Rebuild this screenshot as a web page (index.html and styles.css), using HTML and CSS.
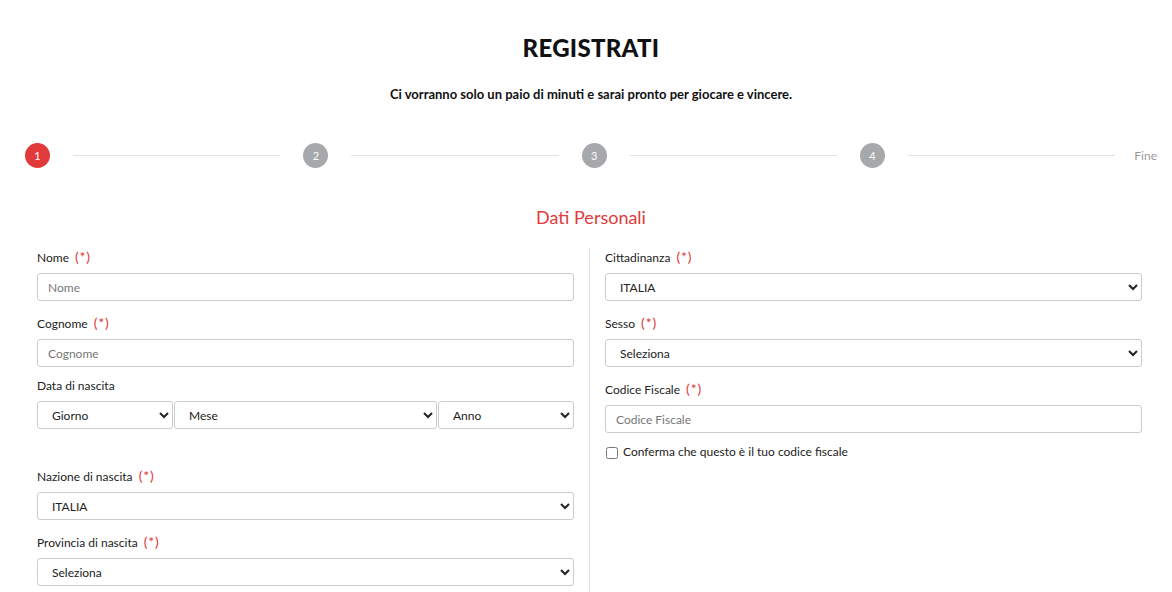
FILE: index.html
```html
<!DOCTYPE html>
<html lang="it">
<head>
    <meta charset="UTF-8">
    <meta name="viewport" content="width=device-width, initial-scale=1.0">
    <title>Registrati</title>
    <link rel="stylesheet" href="styles.css">
</head>
<body>
    <div class="container">
        <h1>REGISTRATI</h1>
        <p class="subtitle">Ci vorranno solo un paio di minuti e sarai pronto per giocare e vincere.</p>

        <div class="stepper">
            <span class="step active">1</span>
            <span class="step-line"></span>
            <span class="step">2</span>
            <span class="step-line"></span>
            <span class="step">3</span>
            <span class="step-line"></span>
            <span class="step">4</span>
            <span class="step-line last"></span>
            <span class="step-end">Fine</span>
        </div>

        <h2>Dati Personali</h2>

        <div class="form">
            <div class="col col-left">
                <div class="field">
                    <label>Nome <span class="req">(*)</span></label>
                    <input type="text" placeholder="Nome">
                </div>
                <div class="field">
                    <label>Cognome <span class="req">(*)</span></label>
                    <input type="text" placeholder="Cognome">
                </div>
                <div class="field field-date">
                    <label>Data di nascita</label>
                    <div class="date-row">
                        <select><option>Giorno</option></select>
                        <select><option>Mese</option></select>
                        <select><option>Anno</option></select>
                    </div>
                </div>
                <div class="field">
                    <label>Nazione di nascita <span class="req">(*)</span></label>
                    <select><option>ITALIA</option></select>
                </div>
                <div class="field">
                    <label>Provincia di nascita <span class="req">(*)</span></label>
                    <select><option>Seleziona</option></select>
                </div>
            </div>

            <div class="col col-right">
                <div class="field">
                    <label>Cittadinanza <span class="req">(*)</span></label>
                    <select><option>ITALIA</option></select>
                </div>
                <div class="field">
                    <label>Sesso <span class="req">(*)</span></label>
                    <select><option>Seleziona</option></select>
                </div>
                <div class="field">
                    <label>Codice Fiscale <span class="req">(*)</span></label>
                    <input type="text" placeholder="Codice Fiscale">
                </div>
                <label class="check">
                    <input type="checkbox">
                    Conferma che questo è il tuo codice fiscale
                </label>
            </div>
        </div>
    </div>
</body>
</html>
```

FILE: styles.css
```css
body {
    margin: 0;
    font-family: Lato, "Open Sans", Arial, sans-serif;
    color: #222;
    background: #fff;
}
.container {
    width: 1132px;
    margin-left: 25px;
    padding-top: 33px;
}
h1 {
    margin: 0;
    text-align: center;
    font-size: 24px;
    line-height: 30px;
    font-weight: 900;
    color: #111;
    letter-spacing: 0.3px;
}
.subtitle {
    margin: 23px 0 0;
    text-align: center;
    font-size: 13px;
    line-height: 16px;
    font-weight: 700;
    color: #111;
}
.stepper {
    display: flex;
    align-items: center;
    margin-top: 41px;
    height: 25px;
}
.step {
    width: 25px;
    height: 25px;
    border-radius: 50%;
    background: #a6a8ab;
    color: #fff;
    font-size: 11px;
    line-height: 25px;
    text-align: center;
    flex: none;
}
.step.active {
    background: #e03a3a;
}
.step-line {
    flex: 1;
    height: 1px;
    background: #e2e2e2;
    margin: 0 23px;
}
.step-line.last {
    margin-right: 19px;
}
.step-end {
    font-size: 12px;
    color: #999;
    flex: none;
}
h2 {
    margin: 37px 0 0;
    text-align: center;
    font-size: 18px;
    line-height: 24px;
    font-weight: 400;
    color: #e03a3a;
}
.form {
    display: grid;
    grid-template-columns: 564px 568px;
    margin-top: 19px;
}
.col {
    padding-top: 1px;
    padding-bottom: 20px;
}
.col-left {
    padding-left: 12px;
    padding-right: 15px;
}
.col-right {
    border-left: 1px solid #ddd;
    padding-left: 15px;
    padding-right: 15px;
}
.field {
    margin-bottom: 14px;
}
.field label {
    display: block;
    height: 16px;
    font-size: 12px;
    line-height: 16px;
    margin-bottom: 8px;
    color: #222;
}
.req {
    color: #e03a3a;
    font-size: 14px;
    line-height: 16px;
    letter-spacing: 0.8px;
    margin-left: 3px;
}
.field-date {
    margin-bottom: 39px;
}
.field-date label {
    margin-top: -3px;
    margin-bottom: 7px;
}
input[type="text"], select {
    display: block;
    box-sizing: border-box;
    width: 100%;
    height: 28px;
    border: 1px solid #ccc;
    border-radius: 3px;
    background-color: #fff;
    font-family: inherit;
    font-size: 12px;
    color: #222;
}
input[type="text"] {
    padding: 0 10px;
}
input::placeholder {
    color: #777;
}
select {
    padding: 0 6px 0 10px;
}
.date-row {
    display: grid;
    grid-template-columns: 136px 1fr 136px;
    gap: 1px;
}
.check {
    display: flex;
    align-items: center;
    font-size: 12px;
    line-height: 16px;
    color: #222;
    margin-top: -3px;
}
.check input {
    width: 12px;
    height: 12px;
    margin: 2px 5px 0 1px;
}
```
